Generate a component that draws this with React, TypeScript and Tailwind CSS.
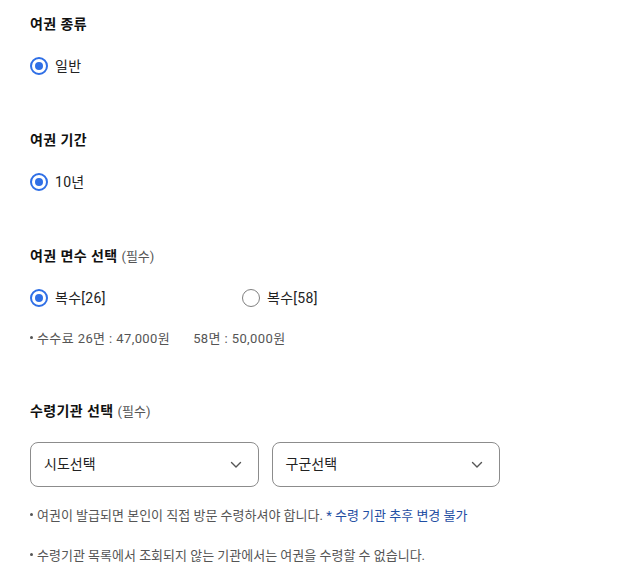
import React from "react";

const font = { fontFamily: 'Roboto, "Noto Sans CJK KR", "Noto Sans", sans-serif' };

function Radio({ checked, label }: { checked?: boolean; label: string }) {
  return (
    <div className="flex items-center h-5">
      {checked ? (
        <span className="w-[18px] h-[18px] rounded-full border-2 border-[#2f6fe6] flex items-center justify-center shrink-0">
          <span className="w-[8px] h-[8px] rounded-full bg-[#2f6fe6]" />
        </span>
      ) : (
        <span className="w-[18px] h-[18px] rounded-full border border-[#808080] shrink-0" />
      )}
      <span className="ml-[7px] text-[14px] leading-5 tracking-[0.3px] text-[#222]">{label}</span>
    </div>
  );
}

function Title({ children, req }: { children: React.ReactNode; req?: boolean }) {
  return (
    <div className="h-5 flex items-baseline leading-5">
      <span className="text-[14px] font-bold tracking-[0.4px] text-[#111]">{children}</span>
      {req && <span className="ml-[4px] text-[13px] text-[#555]">(필수)</span>}
    </div>
  );
}

function Bullet() {
  return <span className="inline-block w-[3px] h-[3px] rounded-full bg-[#555] mr-[4px] align-middle relative top-[-2px]" />;
}

function Select({ label }: { label: string }) {
  return (
    <div className="h-[45px] rounded-[8px] border border-[#8c8c8c] flex items-center justify-between pl-[13px] pr-[16px]">
      <span className="text-[14px] text-[#222]">{label}</span>
      <svg width="12" height="8" viewBox="0 0 12 8" fill="none">
        <path d="M1.5 1.5L6 6L10.5 1.5" stroke="#555" strokeWidth="1.4" strokeLinecap="round" strokeLinejoin="round" />
      </svg>
    </div>
  );
}

export default function App() {
  return (
    <div style={font} className="w-[624px] h-[583px] bg-white pt-[14px] px-[30px]">
      <Title>여권 종류</Title>
      <div className="mt-[22px]">
        <Radio checked label="일반" />
      </div>

      <div className="mt-[54px]">
        <Title>여권 기간</Title>
      </div>
      <div className="mt-[22px]">
        <Radio checked label="10년" />
      </div>

      <div className="mt-[54px]">
        <Title req>여권 면수 선택</Title>
      </div>
      <div className="mt-[22px] flex">
        <div className="w-[212px]">
          <Radio checked label="복수[26]" />
        </div>
        <Radio label="복수[58]" />
      </div>
      <div className="mt-[21px] h-5 leading-5 text-[13px] tracking-[0.4px] text-[#555]">
        <Bullet />
        수수료 26면 : 47,000원<span className="ml-[23px]">58면 : 50,000원</span>
      </div>

      <div className="mt-[52px]">
        <Title req>수령기관 선택</Title>
      </div>
      <div className="mt-[21px] w-[470px] grid grid-cols-2 gap-[13px]">
        <Select label="시도선택" />
        <Select label="구군선택" />
      </div>

      <div className="mt-[19px] h-5 leading-5 text-[13px] text-[#555]">
        <Bullet />
        여권이 발급되면 본인이 직접 방문 수령하셔야 합니다.{" "}
        <span className="text-[#1f4ea3]">* 수령 기관 추후 변경 불가</span>
      </div>
      <div className="mt-[20px] h-5 leading-5 text-[13px] text-[#555]">
        <Bullet />
        수령기관 목록에서 조회되지 않는 기관에서는 여권을 수령할 수 없습니다.
      </div>
    </div>
  );
}
